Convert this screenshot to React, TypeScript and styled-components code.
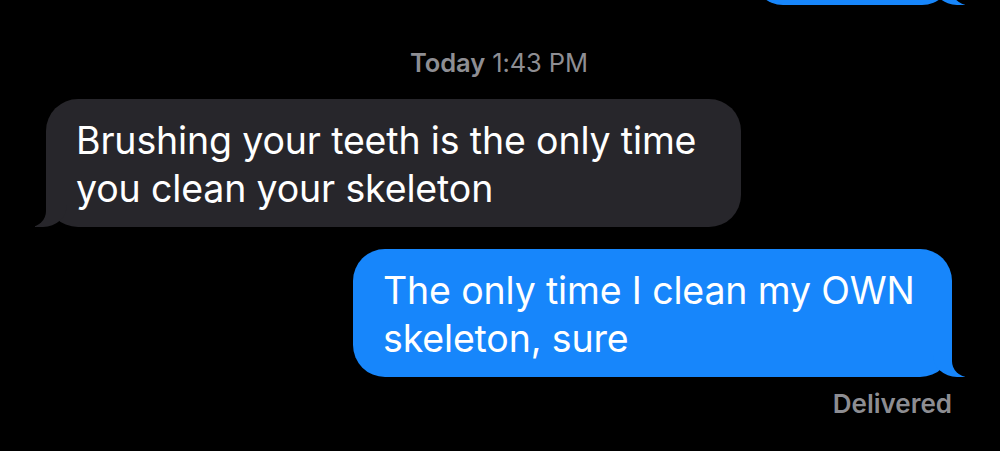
import React from "react";
import styled, { createGlobalStyle, css } from "styled-components";

const Global = createGlobalStyle`
  html, body { margin: 0; padding: 0; background: #000; }
  body { font-family: Inter, "Noto Sans", "Liberation Sans", sans-serif; -webkit-font-smoothing: antialiased; overflow: hidden; }
`;

const Thread = styled.div`
  width: 1000px;
  height: 451px;
  box-sizing: border-box;
  padding: 0 48px 0 46px;
  display: flex;
  flex-direction: column;
  overflow: hidden;
`;

const Row = styled.div<{ $me?: boolean; $gap: number }>`
  display: flex;
  justify-content: ${(p) => (p.$me ? "flex-end" : "flex-start")};
  margin-top: ${(p) => p.$gap}px;
`;

const Bubble = styled.div<{ $me?: boolean; $width: number; $height?: number }>`
  position: relative;
  box-sizing: border-box;
  width: ${(p) => p.$width}px;
  ${(p) => (p.$height ? `height: ${p.$height}px;` : "")}
  padding: 18px 20px 14px 30px;
  border-radius: 32px;
  font-size: 37.5px;
  line-height: 48px;
  letter-spacing: -0.15px;
  color: #fff;
  background: ${(p) => (p.$me ? "#1786fb" : "#27262b")};

  &::before {
    content: "";
    position: absolute;
    bottom: 0;
    width: 32px;
    height: 32px;
    background: inherit;
    ${(p) =>
      p.$me
        ? css`
            right: -13px;
            border-bottom-left-radius: 24px 22px;
          `
        : css`
            left: -11px;
            border-bottom-right-radius: 24px 22px;
          `}
  }

  &::after {
    content: "";
    position: absolute;
    bottom: 0;
    width: 16px;
    height: 32px;
    background: #000;
    ${(p) =>
      p.$me
        ? css`
            right: -16px;
            border-bottom-left-radius: 16px;
          `
        : css`
            left: -16px;
            border-bottom-right-radius: 16px;
          `}
  }
`;

const Stamp = styled.div`
  margin-top: 43px;
  text-align: center;
  font-size: 25.5px;
  line-height: 30px;
  color: #8e8e93;
  letter-spacing: -0.1px;
`;

const StampDay = styled.span`
  font-weight: 600;
`;

const Status = styled.div`
  align-self: flex-end;
  margin-top: 12px;
  font-size: 26px;
  line-height: 30px;
  font-weight: 600;
  color: #8d8d92;
`;

export default function App() {
  return (
    <>
      <Global />
      <Thread>
        <Row $me $gap={-55}>
          <Bubble $me $width={199} $height={60} aria-hidden="true" />
        </Row>
        <Stamp>
          <StampDay>Today</StampDay> 1:43 PM
        </Stamp>
        <Row $gap={21}>
          <Bubble $width={695}>
            Brushing your teeth is the only time
            <br />
            you clean your skeleton
          </Bubble>
        </Row>
        <Row $me $gap={22}>
          <Bubble $me $width={599}>
            The only time I clean my OWN
            <br />
            skeleton, sure
          </Bubble>
        </Row>
        <Status>Delivered</Status>
      </Thread>
    </>
  );
}
